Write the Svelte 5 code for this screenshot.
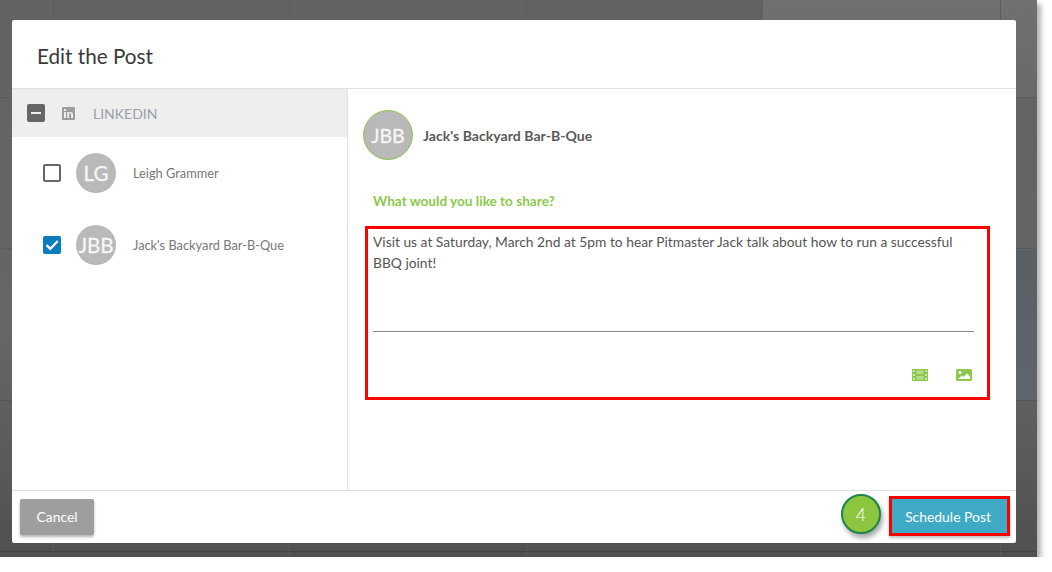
<script>
	const accounts = [
		{ initials: 'LG', name: 'Leigh Grammer', checked: false },
		{ initials: 'JBB', name: "Jack's Backyard Bar-B-Que", checked: true }
	];
</script>

<div class="backdrop">
	<div class="modal">
		<header class="modal-head">
			<h1>Edit the Post</h1>
		</header>

		<div class="modal-body">
			<aside class="networks">
				<div class="network">
					<span class="box minus"><span></span></span>
					<svg class="linkedin" width="13" height="13" viewBox="0 0 13 13">
						<rect width="13" height="13" rx="1" fill="#a09c9a" />
						<rect x="2" y="5" width="2" height="6" fill="#eee" />
						<rect x="2" y="2" width="2" height="2" fill="#eee" />
						<path d="M5.2 5h1.9v.9c.4-.7 1.100-1 1.900-1 1.500 0 2 1 2 2.500V11H9.100V7.800c0-.8-.3-1.300-1-1.300s-1 .5-1 1.300V11H5.200z" fill="#eee" />
					</svg>
					<span class="network-name">LINKEDIN</span>
				</div>

				{#each accounts as account}
					<div class="account">
						{#if account.checked}
							<span class="box checked">
								<svg width="18" height="18" viewBox="0 0 18 18">
									<path d="M3.500 9.200l3.800 3.600L14.800 5" fill="none" stroke="#fff" stroke-width="2.400" />
								</svg>
							</span>
						{:else}
							<span class="box"></span>
						{/if}
						<span class="avatar">{account.initials}</span>
						<span class="account-name">{account.name}</span>
					</div>
				{/each}
			</aside>

			<section class="editor">
				<div class="author">
					<span class="avatar large">JBB</span>
					<strong>Jack's Backyard Bar-B-Que</strong>
				</div>

				<p class="prompt">What would you like to share?</p>

				<div class="composer">
					<p class="message">
						Visit us at Saturday, March 2nd at 5pm to hear Pitmaster Jack talk about how to run a successful BBQ joint!
					</p>
					<div class="attach">
						<svg width="16" height="12" viewBox="0 0 16 12">
							<rect width="16" height="12" rx="0.5" fill="#8cc84b" />
							<path
								fill="#e2f1d0"
								d="M1 1.200h1.600v1.800H1zM1 5.100h1.600v1.800H1zM1 9h1.600v1.800H1zM13.400 1.200H15v1.800h-1.600zM13.400 5.100H15v1.800h-1.600zM13.400 9H15v1.800h-1.600z"
							/>
							<path fill="#b5dc8c" d="M4.500 1.500h7v3.500h-7zM4.500 7h7v3.500h-7z" />
						</svg>
						<svg width="16" height="12" viewBox="0 0 16 12">
							<path
								fill="#8cc84b"
								fill-rule="evenodd"
								d="M1.500 0h13A1.500 1.500 0 0 1 16 1.500v9a1.500 1.500 0 0 1-1.500 1.500h-13A1.500 1.500 0 0 1 0 10.500v-9A1.500 1.500 0 0 1 1.500 0zM2 10h12V7.500L11 4.500 7.500 8 6 6.500zM4 2a1.500 1.500 0 1 0 0 3 1.500 1.500 0 0 0 0-3z"
							/>
						</svg>
					</div>
				</div>
			</section>
		</div>

		<footer class="modal-foot">
			<button class="cancel">Cancel</button>
			<div class="submit">
				<span class="step">4</span>
				<button class="schedule">Schedule Post</button>
			</div>
		</footer>
	</div>
</div>

<style>
	:global(body) {
		background: #fff;
	}
	.backdrop {
		box-sizing: border-box;
		width: 1037px;
		height: 557px;
		padding: 20px 21px 14px 12px;
		font-family: Lato, 'Open Sans', sans-serif;
		box-shadow: 4px 4px 5px rgba(0, 0, 0, 0.3);
		background:
			linear-gradient(#5b5b5b, #5b5b5b) 0 97px / 100% 1px no-repeat,
			linear-gradient(#5a5a5a, #5a5a5a) 0 248px / 100% 1px no-repeat,
			linear-gradient(#565656, #565656) 0 400px / 100% 1px no-repeat,
			linear-gradient(#454545, #454545) 0 551px / 100% 1px no-repeat,
			linear-gradient(#5c5c5c, #5c5c5c) 53px 0 / 1px 100% no-repeat,
			linear-gradient(#5c5c5c, #5c5c5c) 289px 0 / 1px 100% no-repeat,
			linear-gradient(#5c5c5c, #5c5c5c) 526px 0 / 1px 100% no-repeat,
			linear-gradient(#5c5c5c, #5c5c5c) 1000px 0 / 1px 100% no-repeat,
			linear-gradient(#5a5f64, #5f666c) 1016px 250px / 21px 150px no-repeat,
			linear-gradient(#707070, #696969) 763px 0 / 274px 97px no-repeat,
			linear-gradient(#626262 0%, #666 60%, #505050 100%);
	}
	.modal {
		height: 100%;
		display: flex;
		flex-direction: column;
		background: #fff;
		border-radius: 2px;
	}
	.modal-head {
		height: 69px;
		flex: none;
		display: flex;
		align-items: center;
		padding: 3px 0 0 25px;
		box-sizing: border-box;
		border-bottom: 1px solid #e2e2e2;
	}
	h1 {
		margin: 0;
		font-size: 20.7px;
		font-weight: 400;
		color: #3a3a3a;
	}
	.modal-body {
		flex: 1;
		display: flex;
		min-height: 0;
	}
	.networks {
		width: 336px;
		flex: none;
		box-sizing: border-box;
		border-right: 1px solid #e2e2e2;
	}
	.network {
		height: 48px;
		display: flex;
		align-items: center;
		padding-left: 15px;
		background: #eee;
	}
	.box {
		box-sizing: border-box;
		width: 18px;
		height: 18px;
		flex: none;
		display: block;
		border: 2px solid #666;
		border-radius: 2px;
	}
	.minus {
		display: flex;
		align-items: center;
		justify-content: center;
		background: #666;
	}
	.minus span {
		width: 10px;
		height: 2px;
		background: #eee;
	}
	.linkedin {
		margin-left: 17px;
	}
	.network-name {
		margin-left: 18px;
		font-size: 14px;
		color: #9aa0a8;
	}
	.account {
		height: 72px;
		display: flex;
		align-items: center;
		padding-left: 31px;
	}
	.checked {
		border: 0;
		background: #0a7dbd;
	}
	.checked svg {
		display: block;
	}
	.avatar {
		width: 40px;
		height: 40px;
		margin-left: 15px;
		flex: none;
		display: flex;
		align-items: center;
		justify-content: center;
		border-radius: 50%;
		background: #b9b9b9;
		color: #f6f6f6;
		font-size: 20.5px;
		-webkit-text-stroke: 0.3px #f6f6f6;
	}
	.account-name {
		margin-left: 17px;
		font-size: 12.8px;
		color: #777;
	}
	.editor {
		flex: 1;
		box-sizing: border-box;
		padding: 21px 26px 0 15px;
	}
	.author {
		display: flex;
		align-items: center;
	}
	.avatar.large {
		box-sizing: border-box;
		width: 50px;
		height: 50px;
		margin-left: 0;
		border: 1px solid #8cc84b;
		font-size: 19.500px;
	}
	.author strong {
		margin-left: 10px;
		font-size: 14.1px;
		font-weight: 700;
		color: #5a5a5a;
	}
	.prompt {
		margin: 31px 0 0 10px;
		font-size: 13.6px;
		font-weight: 700;
		color: #8cc84b;
		line-height: 20px;
	}
	.composer {
		box-sizing: border-box;
		height: 174px;
		margin: 15px 0 0 2px;
		padding: 0 13px 0 5px;
		border: 3px solid #f00;
	}
	.message {
		box-sizing: border-box;
		height: 103px;
		margin: 0;
		padding-top: 2px;
		border-bottom: 1px solid #8a8a8a;
		font-size: 13.8px;
		line-height: 21px;
		color: #555;
	}
	.attach {
		display: flex;
		justify-content: flex-end;
		gap: 28px;
		padding: 37px 2px 0 0;
	}
	.attach svg {
		display: block;
	}
	.modal-foot {
		height: 53px;
		flex: none;
		box-sizing: border-box;
		display: flex;
		align-items: flex-start;
		justify-content: space-between;
		padding: 5px 6px 0 8px;
		border-top: 1px solid #e2e2e2;
	}
	button {
		border: 0;
		font-family: inherit;
		font-size: 13.9px;
		color: #fff;
	}
	.cancel {
		width: 74px;
		height: 36px;
		margin-top: 3px;
		padding-bottom: 2px;
		background: #9e9e9e;
		border-radius: 2px;
		box-shadow: 0 2px 3px rgba(0, 0, 0, 0.3);
	}
	.submit {
		display: flex;
		align-items: flex-start;
		gap: 8px;
	}
	.step {
		box-sizing: border-box;
		width: 40px;
		height: 40px;
		margin-top: -2px;
		display: flex;
		align-items: center;
		justify-content: center;
		border: 2px solid #1e8449;
		border-radius: 50%;
		background: #8cc63f;
		color: #fff;
		font-size: 18px;
		font-weight: 300;
		box-shadow: 2px 4px 5px rgba(0, 0, 0, 0.35);
	}
	.schedule {
		box-sizing: border-box;
		width: 121px;
		height: 40px;
		padding: 0 3px 0 0;
		background: #3eaac3;
		border: 3px solid #f00;
		box-shadow: 0 2px 3px rgba(0, 0, 0, 0.25);
	}
</style>
